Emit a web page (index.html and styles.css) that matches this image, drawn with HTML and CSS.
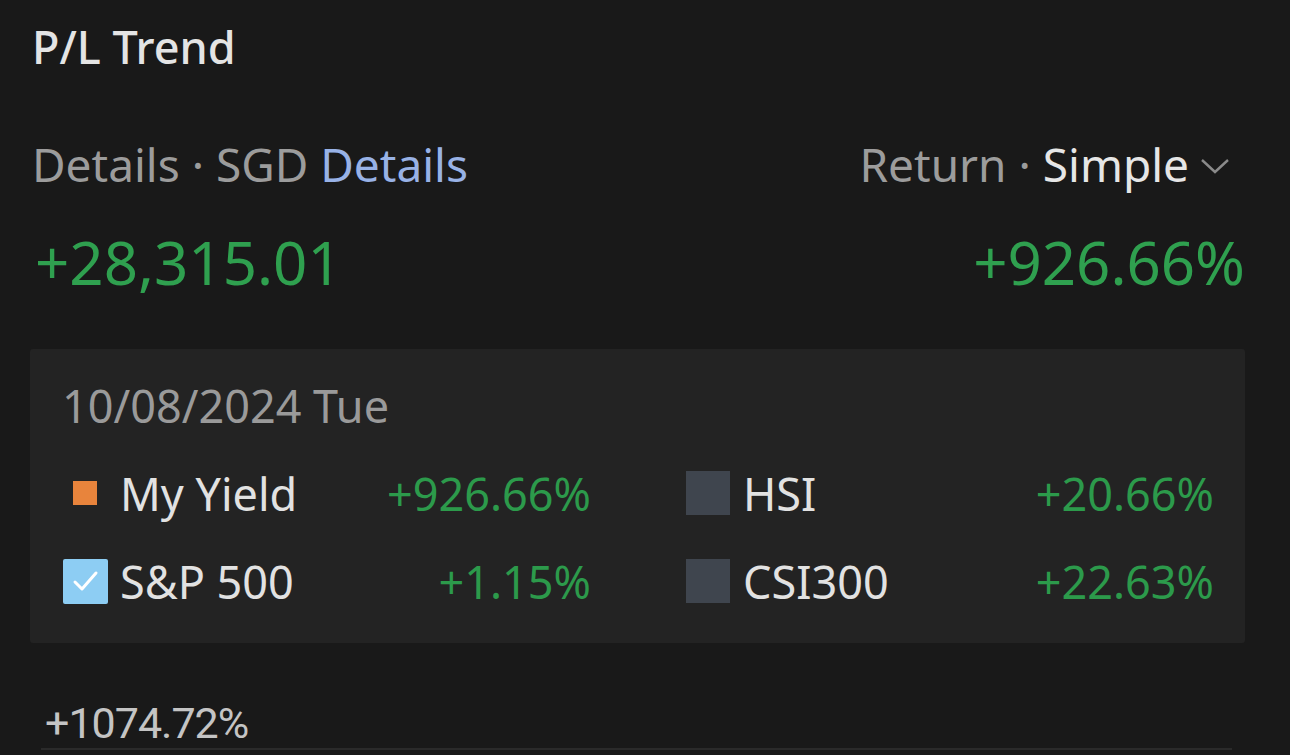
FILE: index.html
```html
<!DOCTYPE html>
<html lang="en">
  <head>
    <meta charset="UTF-8" />
    <meta name="viewport" content="width=device-width, initial-scale=1.0" />
    <title>P/L Trend</title>
    <link rel="stylesheet" href="styles.css">
  </head>
  <body>
    <!-- Cabeçalho do cartão -->
    <h1 class="title">P/L Trend</h1>

    <!-- Linha de rótulos -->
    <div class="summary-row labels">
      <div class="label-left">
        Details · SGD <span class="link">Details</span>
      </div>
      <div class="label-right">
        <span>Return · <span class="mode">Simple</span></span>
        <svg class="chevron" width="32" height="20" viewBox="0 0 32 20">
          <path d="M3 4 L16 16 L29 4" fill="none" stroke="#8a8a8a" stroke-width="2.4" />
        </svg>
      </div>
    </div>

    <!-- Valores principais -->
    <div class="summary-row values">
      <div class="big-value">+28,315.01</div>
      <div class="big-value">+926.66%</div>
    </div>

    <!-- Caixa de detalhes do dia selecionado -->
    <div class="tooltip">
      <div class="tooltip-date">10/08/2024 Tue</div>
      <div class="legend">
        <div class="legend-item">
          <span class="marker"><span class="dot-orange"></span></span>
          <span class="legend-name">My Yield</span>
          <span class="legend-value">+926.66%</span>
        </div>
        <div class="legend-item">
          <span class="marker"><span class="box-grey"></span></span>
          <span class="legend-name">HSI</span>
          <span class="legend-value">+20.66%</span>
        </div>
        <div class="legend-item">
          <span class="marker">
            <span class="box-checked">
              <svg width="45" height="45" viewBox="0 0 45 45">
                <path d="M12 23 L19 30 L33 14" fill="none" stroke="#ffffff" stroke-width="3" stroke-linecap="round" stroke-linejoin="round" />
              </svg>
            </span>
          </span>
          <span class="legend-name">S&amp;P 500</span>
          <span class="legend-value">+1.15%</span>
        </div>
        <div class="legend-item">
          <span class="marker"><span class="box-grey"></span></span>
          <span class="legend-name">CSI300</span>
          <span class="legend-value">+22.63%</span>
        </div>
      </div>
    </div>

    <!-- Eixo do gráfico -->
    <div class="axis-label">+1074.72%</div>
    <div class="axis-line"></div>
  </body>
</html>
```

FILE: styles.css
```css
/* Reset básico */
html,
body {
  margin: 0;
  padding: 0;
  height: 100%;
}

body {
  background-color: #191919;
  color: #e2e2e2;
  font-family: 'Noto Sans', 'Open Sans', sans-serif;
  padding: 0 45px 0 32px;
  overflow: hidden;
}

/* Título */
.title {
  margin: 24px 0 0 0;
  font-size: 45px;
  line-height: 46px;
  font-weight: 500;
  color: #e4e4e4;
}

.summary-row {
  display: flex;
  justify-content: space-between;
  align-items: center;
}

.labels {
  margin-top: 71px;
  font-size: 46px;
  line-height: 46px;
  color: #9c9c9c;
}

.link {
  color: #98b2e6;
}

.label-right {
  display: flex;
  align-items: center;
  gap: 10px;
  margin-right: 14px;
}

.label-right .mode {
  color: #e6e6e6;
}

.chevron {
  margin-top: 4px;
}

/* Números grandes em verde */
.values {
  margin-top: 42px;
  margin-left: 3px;
}

.big-value {
  font-size: 60px;
  line-height: 66px;
  color: #2fa04f;
}

/* Caixa de detalhes */
.tooltip {
  margin-top: 54px;
  margin-left: -2px;
  background-color: #232323;
  border-radius: 3px;
  padding: 34px 31px 39px 32px;
}

.tooltip-date {
  font-size: 45px;
  line-height: 46px;
  color: #9a9a9a;
}

.legend {
  display: grid;
  grid-template-columns: 1fr 1fr;
  column-gap: 94px;
  row-gap: 42px;
  margin-top: 41px;
}

.legend-item {
  display: flex;
  align-items: center;
  height: 46px;
  font-size: 45px;
}

.marker {
  width: 46px;
  height: 46px;
  margin-right: 12px;
  display: flex;
  align-items: center;
  justify-content: center;
}

.dot-orange {
  width: 24px;
  height: 24px;
  background-color: #e8843c;
}

.box-grey {
  width: 44px;
  height: 44px;
  background-color: #3f454e;
}

.box-checked {
  width: 45px;
  height: 45px;
  background-color: #8dcdf3;
  border-radius: 2px;
  display: block;
}

.box-checked svg {
  display: block;
}

.legend-name {
  flex: 1;
  color: #e2e2e2;
}

.legend-value {
  color: #2c9a4b;
}

/* Eixo */
.axis-label {
  margin-top: 59px;
  margin-left: 13px;
  font-family: Roboto, sans-serif;
  font-size: 43px;
  line-height: 42px;
  letter-spacing: -1px;
  color: #c4c4c4;
}

.axis-line {
  margin: 4px 13px 0 9px;
  height: 2px;
  background-color: #2a2a2a;
}
```
